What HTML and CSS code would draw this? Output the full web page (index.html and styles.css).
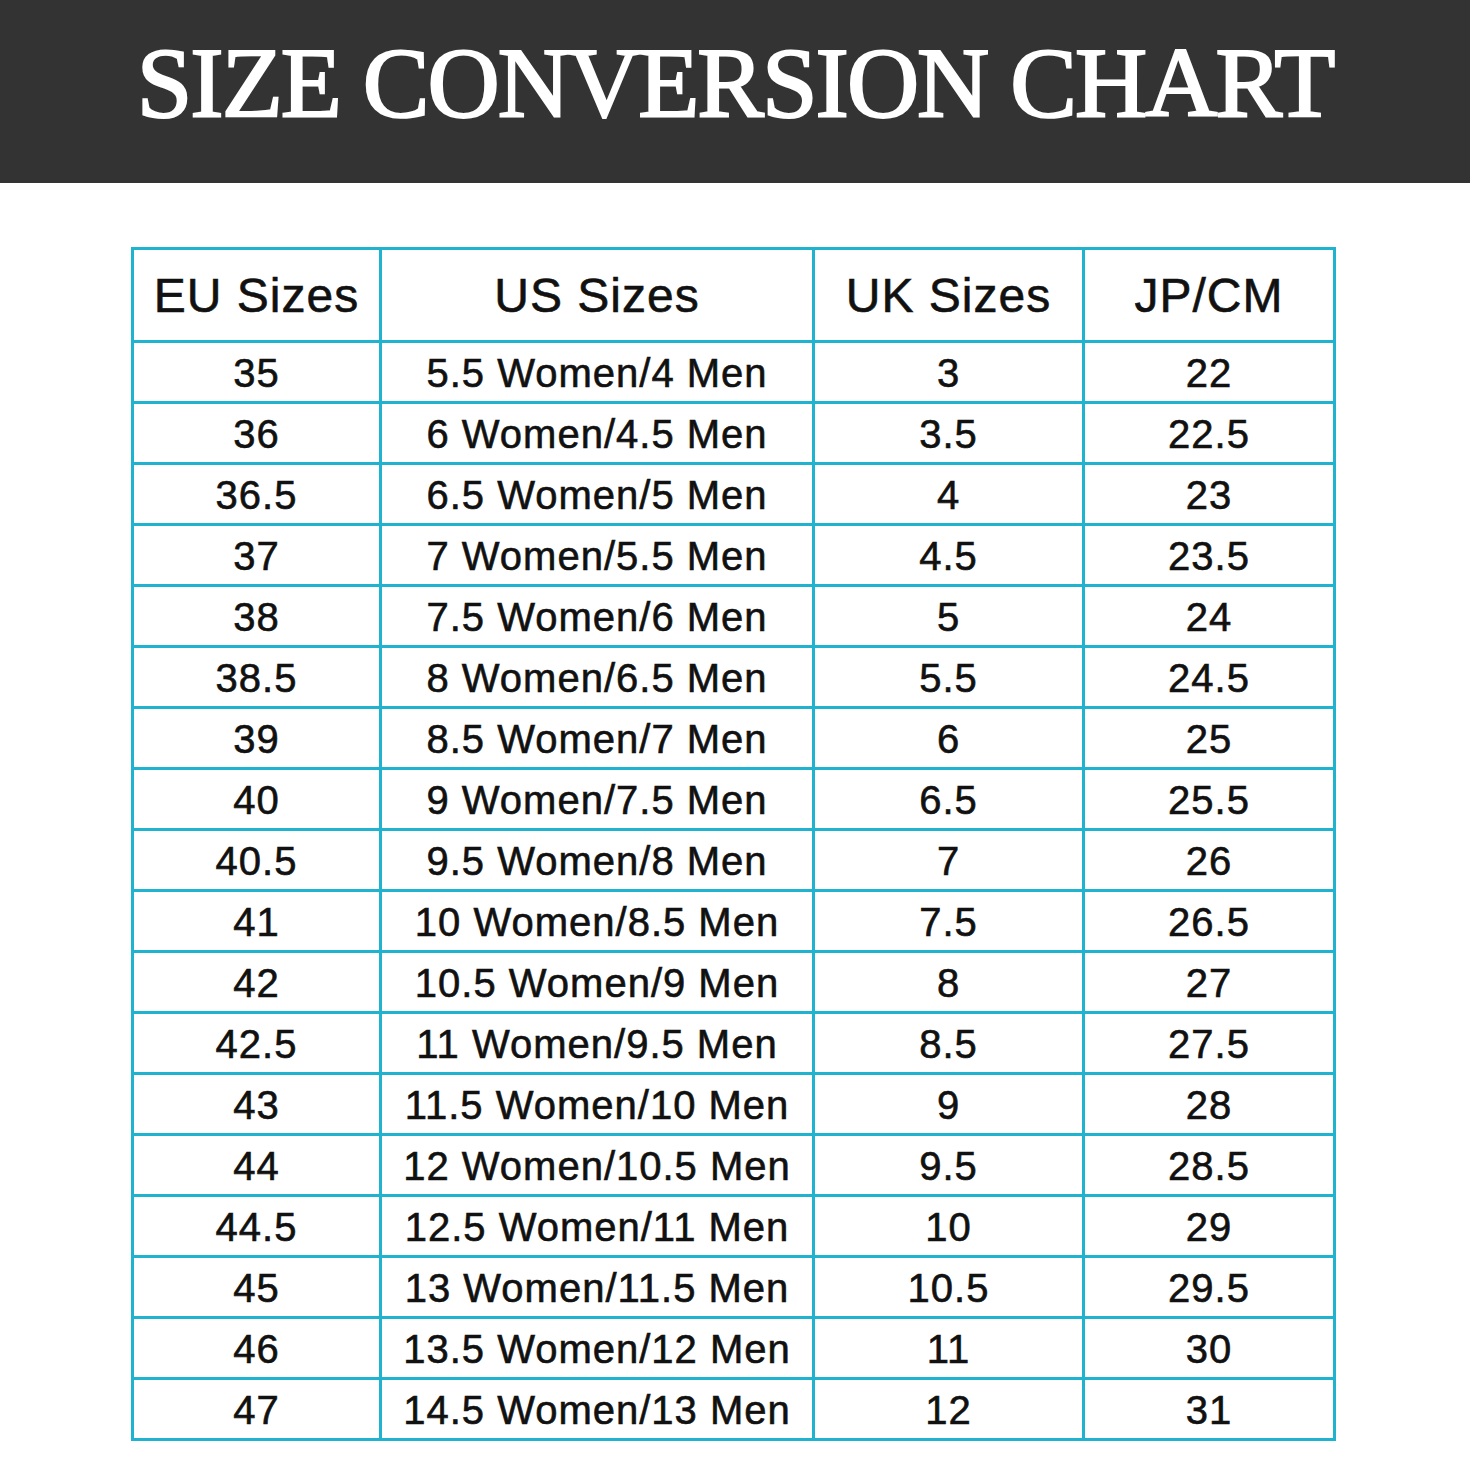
FILE: index.html
```html
<!DOCTYPE html>
<html lang="en">
<head>
<meta charset="utf-8">
<title>Size Conversion Chart</title>
<link rel="stylesheet" href="styles.css">
</head>
<body>
<header class="banner"><h1 class="title">SIZE CONVERSION CHART</h1></header>
<main class="chart">
  <div class="cell head">EU Sizes</div><div class="cell head">US Sizes</div><div class="cell head">UK Sizes</div><div class="cell head">JP/CM</div>
  <div class="cell">35</div><div class="cell">5.5 Women/4 Men</div><div class="cell">3</div><div class="cell">22</div>
  <div class="cell">36</div><div class="cell">6 Women/4.5 Men</div><div class="cell">3.5</div><div class="cell">22.5</div>
  <div class="cell">36.5</div><div class="cell">6.5 Women/5 Men</div><div class="cell">4</div><div class="cell">23</div>
  <div class="cell">37</div><div class="cell">7 Women/5.5 Men</div><div class="cell">4.5</div><div class="cell">23.5</div>
  <div class="cell">38</div><div class="cell">7.5 Women/6 Men</div><div class="cell">5</div><div class="cell">24</div>
  <div class="cell">38.5</div><div class="cell">8 Women/6.5 Men</div><div class="cell">5.5</div><div class="cell">24.5</div>
  <div class="cell">39</div><div class="cell">8.5 Women/7 Men</div><div class="cell">6</div><div class="cell">25</div>
  <div class="cell">40</div><div class="cell">9 Women/7.5 Men</div><div class="cell">6.5</div><div class="cell">25.5</div>
  <div class="cell">40.5</div><div class="cell">9.5 Women/8 Men</div><div class="cell">7</div><div class="cell">26</div>
  <div class="cell">41</div><div class="cell">10 Women/8.5 Men</div><div class="cell">7.5</div><div class="cell">26.5</div>
  <div class="cell">42</div><div class="cell">10.5 Women/9 Men</div><div class="cell">8</div><div class="cell">27</div>
  <div class="cell">42.5</div><div class="cell">11 Women/9.5 Men</div><div class="cell">8.5</div><div class="cell">27.5</div>
  <div class="cell">43</div><div class="cell">11.5 Women/10 Men</div><div class="cell">9</div><div class="cell">28</div>
  <div class="cell">44</div><div class="cell">12 Women/10.5 Men</div><div class="cell">9.5</div><div class="cell">28.5</div>
  <div class="cell">44.5</div><div class="cell">12.5 Women/11 Men</div><div class="cell">10</div><div class="cell">29</div>
  <div class="cell">45</div><div class="cell">13 Women/11.5 Men</div><div class="cell">10.5</div><div class="cell">29.5</div>
  <div class="cell">46</div><div class="cell">13.5 Women/12 Men</div><div class="cell">11</div><div class="cell">30</div>
  <div class="cell">47</div><div class="cell">14.5 Women/13 Men</div><div class="cell">12</div><div class="cell">31</div>
</main>
</body>
</html>
```
FILE: styles.css
```css
html, body {
  margin: 0;
  padding: 0;
  background: #ffffff;
}
.banner {
  height: 183px;
  background: #333333;
  display: flex;
  align-items: center;
  justify-content: center;
}
.title {
  margin: 0 0 18px 0;
  font-family: "Liberation Serif", "Times New Roman", serif;
  font-weight: normal;
  font-size: 100px;
  line-height: 1;
  letter-spacing: -2px;
  color: #ffffff;
  -webkit-text-stroke: 2.2px #ffffff;
  white-space: nowrap;
}
.chart {
  margin: 64px 0 0 131px;
  width: 1205px;
  display: grid;
  grid-template-columns: 245px 430px 267px 248px;
  grid-template-rows: 90px;
  grid-auto-rows: 58px;
  gap: 3px;
  padding: 3px;
  box-sizing: border-box;
  background: #1fb3cf;
}
.cell {
  background: #ffffff;
  display: flex;
  align-items: center;
  justify-content: center;
  padding-top: 3px;
  font-family: "Liberation Sans", Arial, sans-serif;
  font-size: 40px;
  letter-spacing: 1px;
  color: #111111;
  -webkit-text-stroke: 0.6px #111111;
  white-space: nowrap;
}
.cell.head {
  font-size: 48px;
  padding-top: 0;
}
```
